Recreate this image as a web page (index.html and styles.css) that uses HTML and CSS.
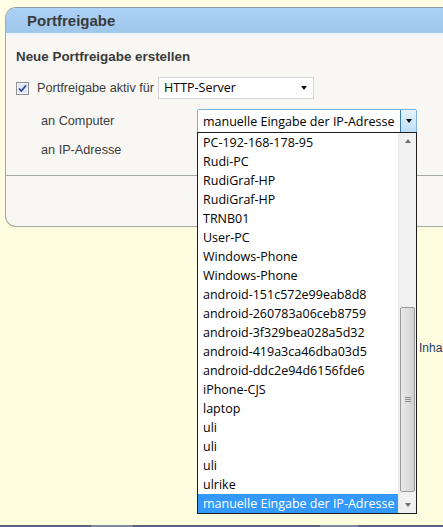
FILE: index.html
```html
<!DOCTYPE html>
<html lang="de">
<head>
<meta charset="utf-8">
<title>Portfreigabe</title>
<link rel="stylesheet" href="styles.css">
</head>
<body>
<div class="page">
  <div class="panel">
    <div class="panel-head">Portfreigabe</div>
    <div class="panel-body">
      <div class="title">Neue Portfreigabe erstellen</div>
      <div class="row row-check">
        <span class="checkbox">
          <svg width="13" height="13" viewBox="0 0 13 13">
            <rect x="0.5" y="0.5" width="12" height="12" fill="#dfe6f5" stroke="#8f8f8f"/>
            <rect x="1.5" y="1.5" width="10" height="10" fill="none" stroke="#f4f6fb"/>
            <path d="M3 6.5 L5.3 9 L10 3.4" fill="none" stroke="#2a3f8f" stroke-width="1.6"/>
          </svg>
        </span>
        <span class="label">Portfreigabe aktiv für</span>
        <span class="select select-a">
          <span class="select-text">HTTP-Server</span>
          <span class="caret"></span>
        </span>
      </div>
      <div class="row row-computer">
        <span class="label label-col">an Computer</span>
        <span class="select select-b">
          <span class="select-text">manuelle Eingabe der IP-Adresse</span>
          <span class="select-btn"><span class="caret"></span></span>
          <div class="dropdown">
            <ul class="options">
              <li>PC-192-168-178-95</li>
              <li>Rudi-PC</li>
              <li>RudiGraf-HP</li>
              <li>RudiGraf-HP</li>
              <li>TRNB01</li>
              <li>User-PC</li>
              <li>Windows-Phone</li>
              <li>Windows-Phone</li>
              <li>android-151c572e99eab8d8</li>
              <li>android-260783a06ceb8759</li>
              <li>android-3f329bea028a5d32</li>
              <li>android-419a3ca46dba03d5</li>
              <li>android-ddc2e94d6156fde6</li>
              <li>iPhone-CJS</li>
              <li>laptop</li>
              <li>uli</li>
              <li>uli</li>
              <li>uli</li>
              <li>ulrike</li>
              <li class="selected">manuelle Eingabe der IP-Adresse</li>
            </ul>
            <div class="scrollbar">
              <div class="sb-btn"><span class="sb-up"></span></div>
              <div class="sb-track">
                <div class="sb-thumb"><span class="grip"></span></div>
              </div>
              <div class="sb-btn"><span class="sb-down"></span></div>
            </div>
          </div>
        </span>
      </div>
      <div class="row row-ip">
        <span class="label label-col">an IP-Adresse</span>
      </div>
    </div>
    <div class="panel-foot"></div>
  </div>
  <div class="below">Inhalt</div>
  <div class="taskbar">
    <span class="tb tb1"></span><span class="tb tb2"></span><span class="tb tb3"></span><span class="tb tb4"></span><span class="tb tb5"></span>
  </div>
</div>
</body>
</html>
```
FILE: styles.css
```css
html, body {
  margin: 0;
  padding: 0;
}
body {
  width: 443px;
  height: 527px;
  overflow: hidden;
  background: #fefde0;
  font-family: "Liberation Sans", Arial, sans-serif;
  color: #3a3a3a;
}
.page {
  height: 527px;
  display: flex;
  flex-direction: column;
  background: linear-gradient(#fffee6 0, #fefde0 60px, #fefde0 100%);
}
.panel {
  margin-top: 7px;
  margin-left: 5px;
  width: 460px;
  flex: none;
  border-left: 1px solid #a3aaa3;
  border-bottom: 1px solid #a3aaa3;
  border-top: 1px solid #8d9ca6;
  border-radius: 11px 0 0 11px;
  background: #f8f7f4;
}
.panel-head {
  height: 25px;
  line-height: 26px;
  padding-left: 21px;
  font-weight: bold;
  font-size: 15px;
  color: #3b3b3b;
  background: linear-gradient(#acd2f6, #9fc6eb);
  border-top-left-radius: 10px;
  border-bottom: 3px solid #f0f4f9;
}
.panel-body {
  padding: 10px 0 0 10px;
  border-bottom: 1px solid #a3aaa3;
  height: 140px;
  box-sizing: border-box;
}
.title {
  height: 22px;
  line-height: 22px;
  font-size: 13.4px;
  font-weight: bold;
  color: #3a3a3a;
}
.row {
  display: flex;
  align-items: center;
  font-size: 12.7px;
}
.row-check {
  margin-top: 9px;
  height: 21px;
}
.row-computer {
  margin-top: 11px;
  height: 24px;
  padding-left: 25px;
}
.row-ip {
  margin-top: 7px;
  height: 20px;
  padding-left: 25px;
}
.checkbox {
  width: 13px;
  height: 13px;
  display: block;
  margin-top: 1px;
}
.checkbox svg { display: block; }
.label {
  color: #3d3d3d;
}
.row-check .label {
  margin-left: 8px;
  margin-right: 4px;
}
.label-col {
  width: 156px;
  flex: none;
}
.select {
  position: relative;
  display: flex;
  align-items: center;
  background: #fff;
  box-sizing: border-box;
  font-family: "Open Sans", "Noto Sans", sans-serif;
  font-size: 12.5px;
  color: #000;
}
.select-a {
  width: 156px;
  height: 22px;
  border: 1px solid #d5d5d5;
  padding-left: 5px;
}
.select-text {
  flex: 1;
  white-space: nowrap;
}
.caret {
  display: block;
  width: 0;
  height: 0;
  border-left: 3.5px solid transparent;
  border-right: 3.5px solid transparent;
  border-top: 4px solid #111;
}
.select-a .caret {
  margin-right: 6px;
}
.select-b {
  width: 220px;
  height: 24px;
  border: 1px solid #7eb0e0;
  border-radius: 2px 2px 0 0;
  padding-left: 5px;
}
.select-btn {
  width: 16px;
  align-self: stretch;
  box-sizing: border-box;
  border-left: 1px solid #3d7bad;
  background: linear-gradient(#e6f3fc, #bcdef7);
  display: flex;
  align-items: center;
  justify-content: center;
}
.dropdown {
  position: absolute;
  left: -1px;
  top: 22px;
  width: 220px;
  height: 382px;
  box-sizing: border-box;
  border: 1px solid #1e1e1e;
  background: #fff;
  display: flex;
}
.options {
  list-style: none;
  margin: 0;
  padding: 0;
  flex: 1;
}
.options li {
  height: 19px;
  line-height: 19px;
  padding-left: 5px;
  white-space: nowrap;
  overflow: hidden;
  color: #000;
}
.options li.selected {
  background: #3399ff;
  color: #fff;
}
.scrollbar {
  width: 17px;
  flex: none;
  display: flex;
  flex-direction: column;
  background: #f0f0f0;
  border-left: 1px solid #ececec;
}
.sb-btn {
  height: 17px;
  flex: none;
  display: flex;
  align-items: center;
  justify-content: center;
}
.sb-up {
  width: 0;
  height: 0;
  border-left: 3.5px solid transparent;
  border-right: 3.5px solid transparent;
  border-bottom: 4px solid #6f6f6f;
  margin-top: -2px;
}
.sb-down {
  width: 0;
  height: 0;
  border-left: 3.5px solid transparent;
  border-right: 3.5px solid transparent;
  border-top: 4px solid #6f6f6f;
}
.sb-track {
  flex: 1;
  padding: 0 1px;
}
.sb-thumb {
  margin-top: 157px;
  height: 185px;
  box-sizing: border-box;
  border: 1px solid #9a9a9a;
  border-radius: 2px;
  background: linear-gradient(90deg, #eaeaea, #dcdcdc 60%, #d0d0d0);
  display: flex;
  align-items: center;
  justify-content: center;
}
.grip {
  width: 6px;
  height: 5px;
  background: repeating-linear-gradient(#8a8a8a 0 1px, transparent 1px 2px);
}
.panel-foot {
  height: 50px;
}
.below {
  margin-top: 114px;
  padding-left: 419px;
  font-size: 12px;
  color: #1f3a66;
  white-space: nowrap;
  height: 14px;
  line-height: 14px;
}
.taskbar {
  margin-top: auto;
  height: 2px;
  display: flex;
  flex: none;
}
.tb { display: block; height: 2px; background: #56677d; }
.tb1 { width: 91px; }
.tb2 { width: 42px; background: #7d8a9b; }
.tb3 { width: 187px; }
.tb4 { width: 38px; background: #7d8a9b; }
.tb5 { flex: 1; }
```
